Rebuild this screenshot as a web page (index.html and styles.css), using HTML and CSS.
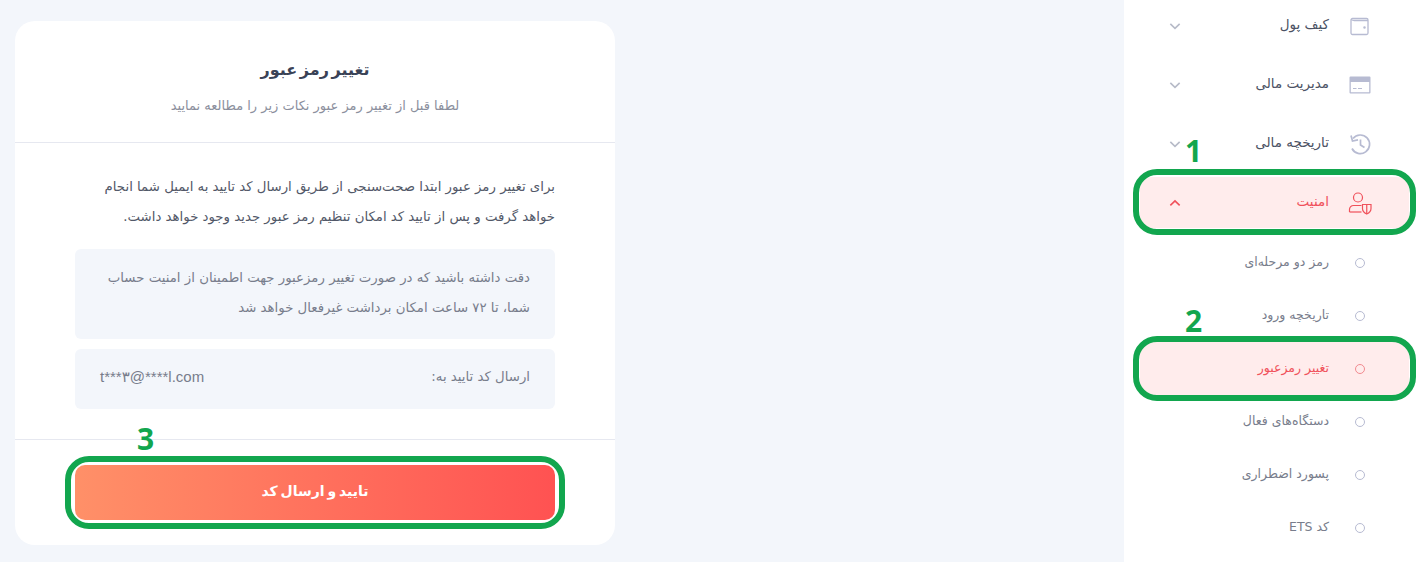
FILE: index.html
```html
<!DOCTYPE html>
<html lang="fa">
<head>
    <meta charset="UTF-8">
    <title>تغییر رمز عبور</title>
    <link rel="stylesheet" href="styles.css">
</head>
<body>
    <div class="page">
        <main class="main">
            <section class="card" dir="rtl">
                <header class="card-head">
                    <h2>تغییر رمز عبور</h2>
                    <p>لطفا قبل از تغییر رمز عبور نکات زیر را مطالعه نمایید</p>
                </header>
                <div class="card-body">
                    <p class="intro">برای تغییر رمز عبور ابتدا صحت‌سنجی از طریق ارسال کد تایید به ایمیل شما انجام خواهد گرفت و پس از تایید کد امکان تنظیم رمز عبور جدید وجود خواهد داشت.</p>
                    <div class="note">دقت داشته باشید که در صورت تغییر رمزعبور جهت اطمینان از امنیت حساب شما، تا ۷۲ ساعت امکان برداشت غیرفعال خواهد شد</div>
                    <div class="send-to">
                        <span>ارسال کد تایید به:</span>
                        <bdi class="email" dir="ltr">t***۳@****l.com</bdi>
                    </div>
                </div>
                <footer class="card-foot">
                    <span class="step step-3" dir="ltr">3</span>
                    <button class="submit">تایید و ارسال کد</button>
                    <span class="ring ring-btn"></span>
                </footer>
            </section>
        </main>

        <aside class="sidebar" dir="rtl">
            <a class="menu-item">
                <svg class="menu-icon" viewBox="0 0 24 24" fill="none" stroke="#b7bbd2" stroke-width="1.3"><path d="M4.5 4.5h14a1.5 1.5 0 0 1 1.5 1.5v13a1.5 1.5 0 0 1-1.5 1.5h-14A1.5 1.5 0 0 1 3 19V6a1.500 1.500 0 0 1 1.500-1.500z"/><path d="M3.200 5.500c1 .8 2 1 3 1H20"/><circle cx="16.500" cy="13.500" r=".6" fill="#b7bbd2"/></svg>
                <span class="label">کیف پول</span>
                <svg class="chev" viewBox="0 0 12 12" fill="none" stroke="#b7bbc8" stroke-width="1.400"><path d="M2 4.200l4 3.800 4-3.800"/></svg>
            </a>
            <a class="menu-item">
                <svg class="menu-icon" viewBox="0 0 24 24" fill="#b7bbd2"><path d="M2.500 3.500h19a1 1 0 0 1 1 1v15a1 1 0 0 1-1 1h-19a1 1 0 0 1-1-1v-15a1 1 0 0 1 1-1zm.3 5.500v10.200h18.400V9zM5 15h3.500v1H5zm5 0h4v1h-4z" fill-rule="evenodd"/></svg>
                <span class="label">مدیریت مالی</span>
                <svg class="chev" viewBox="0 0 12 12" fill="none" stroke="#b7bbc8" stroke-width="1.400"><path d="M2 4.200l4 3.800 4-3.800"/></svg>
            </a>
            <a class="menu-item">
                <svg class="menu-icon" viewBox="0 0 24 24" fill="none" stroke="#b7bbd2" stroke-width="1.700"><path d="M5 6.500A9.300 9.300 0 1 1 4 16.500"/><path d="M3 3.500l1.500 5.500 5.500-1.200"/><path d="M12.500 7.500V13l4 2.500"/></svg>
                <span class="label">تاریخچه مالی</span>
                <svg class="chev" viewBox="0 0 12 12" fill="none" stroke="#b7bbc8" stroke-width="1.400"><path d="M2 4.200l4 3.800 4-3.800"/></svg>
            </a>
            <span class="step step-1" dir="ltr">1</span>
            <a class="menu-item open">
                <svg class="menu-icon" viewBox="0 0 24 24" fill="none" stroke="#f0515b" stroke-width="1.200"><circle cx="10" cy="6.500" r="4.500"/><path d="M1.500 21v-2.500a4 4 0 0 1 4-4h8"/><path d="M1.500 21h12"/><path d="M14.500 13.500h8.500v4c0 2.500-2 4.500-4.250 5.500-2.250-1-4.250-3-4.250-5.500z"/><path d="M18.750 13.500v9.500"/></svg>
                <span class="label">امنیت</span>
                <svg class="chev" viewBox="0 0 12 12" fill="none" stroke="#f0515b" stroke-width="1.400"><path d="M2 8l4-3.800L10 8"/></svg>
                <span class="ring ring-open"></span>
            </a>
            <a class="sub-item"><i class="dot"></i><span class="label">رمز دو مرحله‌ای</span></a>
            <a class="sub-item"><i class="dot"></i><span class="label">تاریخچه ورود</span><span class="step step-2" dir="ltr">2</span></a>
            <a class="sub-item active"><i class="dot"></i><span class="label">تغییر رمزعبور</span><span class="ring ring-sub"></span></a>
            <a class="sub-item"><i class="dot"></i><span class="label">دستگاه‌های فعال</span></a>
            <a class="sub-item"><i class="dot"></i><span class="label">پسورد اضطراری</span></a>
            <a class="sub-item"><i class="dot"></i><span class="label">کد ETS</span></a>
        </aside>
    </div>
</body>
</html>
```

FILE: styles.css
```css
* {
    margin: 0;
    padding: 0;
    box-sizing: border-box;
    font-family: "DejaVu Sans", sans-serif;
}
html, body {
    height: 100%;
    overflow: hidden;
}
body {
    background-color: #f3f6fb;
}
.page {
    display: flex;
    justify-content: space-between;
    height: 562px;
}
.main {
    padding: 21px 0 0 15px;
}
.card {
    width: 600px;
    height: 524px;
    background: white;
    border-radius: 20px;
    display: flex;
    flex-direction: column;
}
.card-head {
    height: 122px;
    border-bottom: 1px solid #e6e8f0;
    text-align: center;
    padding-top: 37px;
}
.card-head h2 {
    font-size: 16px;
    line-height: 24px;
    font-weight: bold;
    word-spacing: -3px;
    color: #3a4256;
}
.card-head p {
    font-size: 13px;
    line-height: 24px;
    margin-top: 12px;
    color: #8b8f9d;
}
.card-body {
    height: 297px;
    padding: 29px 60px 0;
    border-bottom: 1px solid #e6e8f0;
}
.intro {
    font-size: 13.3px;
    line-height: 30px;
    color: #525868;
    margin-bottom: 17px;
    padding-left: 22px;
}
.note, .send-to {
    background-color: #f3f6fb;
    border-radius: 6px;
    padding: 14px 25px;
    font-size: 13.3px;
    line-height: 30px;
    color: #787d8c;
}
.note {
    height: 90px;
    margin-bottom: 10px;
}
.send-to {
    height: 60px;
    padding-top: 13px;
    display: flex;
    justify-content: space-between;
}
.email {
    font-family: "Liberation Sans", "DejaVu Sans", sans-serif;
    font-size: 15px;
}
.card-foot {
    position: relative;
    padding: 25px 60px 0;
}
.submit {
    display: block;
    width: 100%;
    height: 55px;
    border: none;
    border-radius: 10px;
    padding-bottom: 3px;
    background: linear-gradient(to right, #ff9068, #ff5252);
    color: white;
    font-size: 14px;
    font-weight: bold;
    word-spacing: -2px;
}
.sidebar {
    width: 294px;
    height: 562px;
    background: white;
    padding: 0 9px 0 16px;
    overflow: hidden;
    position: relative;
}
.menu-item {
    display: flex;
    align-items: center;
    height: 59px;
    padding: 0 37px 0 28px;
    font-size: 13.5px;
    color: #4c5264;
}
.menu-item .label {
    margin-bottom: 3px;
}
.menu-item:first-child {
    margin-top: -4px;
}
.menu-icon {
    width: 24px;
    height: 24px;
    margin-left: 19px;
}
.chev {
    width: 14px;
    height: 14px;
    margin-right: auto;
}
.menu-item.open {
    position: relative;
    height: 51px;
    margin: 4px 0 8px;
    background-color: #ffecec;
    border-radius: 12px;
    color: #f0515b;
}
.sub-item {
    display: flex;
    align-items: center;
    height: 53px;
    padding-right: 37px;
    font-size: 12.5px;
    color: #787d8c;
    position: relative;
}
.sub-item .label {
    margin-bottom: 2px;
}
.sub-item .dot {
    width: 10px;
    height: 10px;
    border: 1px solid #b7bbd2;
    border-radius: 50%;
    margin: 0 7px 0 26px;
}
.sub-item.active {
    background-color: #ffecec;
    border-radius: 12px;
    color: #f0515b;
}
.sub-item.active .dot {
    border-color: #f28a90;
}
/* green annotations lying over the screenshot */
.ring {
    position: absolute;
    border: 6px solid #12a64e;
    border-radius: 24px;
    pointer-events: none;
}
.ring-open {
    top: -8px;
    bottom: -7px;
    left: -7px;
    right: -7px;
}
.ring-sub {
    top: -6px;
    bottom: -6px;
    left: -7px;
    right: -7px;
}
.ring-btn {
    top: 16px;
    left: 50px;
    right: 50px;
    height: 73px;
}
.step {
    position: absolute;
    font-family: "Open Sans", sans-serif;
    font-weight: bold;
    font-size: 30px;
    line-height: 30px;
    color: #12a64e;
}
.step-1 {
    top: 136px;
    left: 61px;
}
.step-2 {
    top: 17px;
    left: 45px;
    z-index: 1;
}
.step-3 {
    top: -16px;
    left: 122px;
}
```
